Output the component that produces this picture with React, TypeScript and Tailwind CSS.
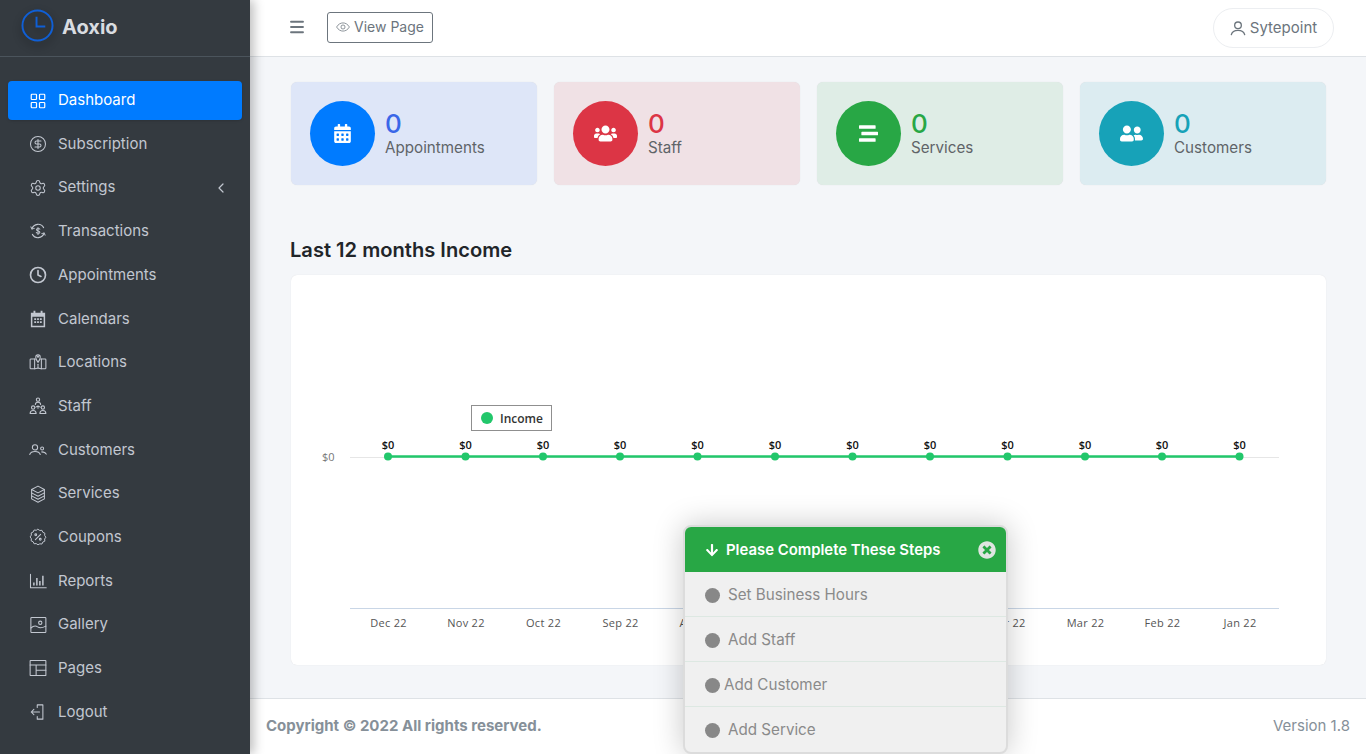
import type { ReactNode } from "react";
import {
  ChevronLeft,
  CircleDollarSign,
  Clock,
  LayoutGrid,
  Menu,
  Settings,
} from "lucide-react";
import {
  FaArrowDown,
  FaCalendarAlt,
  FaStream,
  FaTimesCircle,
  FaUserFriends,
  FaUsers,
} from "react-icons/fa";

const Line = ({ children }: { children: ReactNode }) => (
  <svg viewBox="0 0 24 24" className="h-4.5 w-4.5" fill="none" stroke="currentColor" strokeWidth="1.4" strokeLinecap="round" strokeLinejoin="round">
    {children}
  </svg>
);

const TransactionsIcon = () => (
  <Line>
    <path d="M4 9a8.5 8.5 0 0 1 15.5-1.5" />
    <path d="M20 15a8.5 8.5 0 0 1-15.5 1.5" />
    <path d="M2.5 6.5 4 9.5l3-1" />
    <path d="m21.5 17.5-1.5-3-3 1" />
    <path d="M14.5 9.5c-.5-1-4.5-1.500-4.500.7 0 2.300 4.500 1.100 4.500 3.400 0 2-4 1.700-4.700.4M12 7.500v9" />
  </Line>
);

const CalendarsIcon = () => (
  <svg viewBox="0 0 24 24" className="h-4.5 w-4.5" fill="currentColor">
    <path fillRule="evenodd" d="M6 1h2.500v2.500h7V1H18v2.500h3.500V23h-19V3.500H6zM4.500 9v12h15V9zM7 11h2.500v2.200H7zm3.800 0h2.400v2.200h-2.400zm3.700 0H17v2.200h-2.500zM7 15h2.500v2.200H7zm3.800 0h2.400v2.200h-2.400zm3.700 0H17v2.200h-2.500z" />
  </svg>
);

const LocationsIcon = () => (
  <Line>
    <path d="M8.500 8H2.500a1 1 0 0 0-1 1v11a1 1 0 0 0 1 1H8l4-1 4 1h5.500a1 1 0 0 0 1-1V9a1 1 0 0 0-1-1h-6" />
    <path d="M7.500 8v13M16.500 8v13" />
    <path d="M12 12.500C10 9.500 9 7.500 9 5.500a3 3 0 0 1 6 0c0 2-1 4-3 7z" />
    <path d="M12 15v5" />
    <circle cx="12" cy="5" r=".7" />
  </Line>
);

const StaffIcon = () => (
  <Line>
    <circle cx="12" cy="3.500" r="2.200" />
    <path d="M8.500 10c0-2 1.500-3 3.500-3s3.500 1 3.500 3" />
    <circle cx="5.500" cy="14" r="2.200" />
    <path d="M1.500 22c0-2.500 1.500-4 4-4s4 1.500 4 4z" />
    <circle cx="18.500" cy="14" r="2.200" />
    <path d="M14.500 22c0-2.500 1.500-4 4-4s4 1.500 4 4z" />
    <path d="M12 12v3M12 12l-3 1.500M12 12l3 1.500" />
  </Line>
);

const CustomersIcon = () => (
  <Line>
    <circle cx="8" cy="8.500" r="3.500" />
    <path d="M1 18c.8-2.800 3.500-4 7-4s6.200 1.200 7 4" />
    <circle cx="17.500" cy="10" r="2" />
    <path d="M17 14.500c3 0 5 1 6 3" />
  </Line>
);

const ServicesIcon = () => (
  <Line>
    <path d="m12 1.500 8.500 4.500-8.500 4.500L3.500 6z" />
    <path d="m3.500 10.500 8.500 4.500 8.500-4.500" />
    <path d="m3.500 14.500 8.500 4.500 8.500-4.500" />
    <path d="M3.500 6v12.500l8.500 4.500 8.500-4.500V6" />
  </Line>
);

const CouponsIcon = () => (
  <Line>
    <path d="M12 1.500l2.600 1.800 3.100-.3 1.300 2.900 2.900 1.300-.3 3.100 1.800 2.700-1.800 2.600.3 3.100-2.900 1.300-1.300 2.900-3.100-.3L12 24l-2.600-1.800-3.100.3L5 19.600l-2.900-1.300.3-3.100L.6 12.600l1.800-2.700-.3-3.100L5 5.500l1.300-2.900 3.100.3z" transform="translate(12 12) scale(.92) translate(-12 -12.700)" />
    <path d="M15.500 8.500l-7 7" />
    <circle cx="9" cy="9" r="1.200" />
    <circle cx="15" cy="15" r="1.200" />
  </Line>
);

const ReportsIcon = () => (
  <Line>
    <path d="M2 3v18h21" />
    <path d="M6.500 18v-4M10.500 18V8M14.500 18v-6M18.500 18V5" strokeWidth="2" strokeLinecap="butt" />
  </Line>
);

const GalleryIcon = () => (
  <Line>
    <rect x="2.500" y="2" width="20" height="20" rx="1" />
    <circle cx="15" cy="9" r="2.200" />
    <path d="M2.500 16c4-3.500 6-3.500 9-1.500s6 1.500 11-1" />
  </Line>
);

const PagesIcon = () => (
  <Line>
    <rect x="1.500" y="2" width="21" height="20" rx="0.500" />
    <path d="M1.500 8h21M9.500 8v14M9.500 15h13" />
  </Line>
);

const LogoutIcon = () => (
  <Line>
    <path d="M11 6V2.500h7.500v19H11V18" />
    <path d="M14 12H3M6.500 8.500 3 12l3.500 3.500" />
  </Line>
);

const EyeIcon = () => (
  <svg viewBox="0 0 24 24" className="h-3.5 w-3.5" fill="none" stroke="currentColor" strokeWidth="1.300">
    <path d="M1 12c3-5 7-7 11-7s8 2 11 7c-3 5-7 7-11 7s-8-2-11-7z" />
    <circle cx="12" cy="12" r="3.500" />
  </svg>
);

const UserIcon = () => (
  <svg viewBox="0 0 24 24" className="h-4 w-4" fill="none" stroke="currentColor" strokeWidth="2" strokeLinecap="round">
    <circle cx="12" cy="8" r="5" />
    <path d="M2 22c1-4.500 5-6.500 10-6.500s9 2 10 6.500" />
  </svg>
);

const navItems: { label: string; icon: ReactNode; caret?: boolean }[] = [
  { label: "Dashboard", icon: <LayoutGrid className="h-4.5 w-4.5" strokeWidth={1.6} /> },
  { label: "Subscription", icon: <CircleDollarSign className="h-4.5 w-4.5" strokeWidth={1.4} /> },
  { label: "Settings", icon: <Settings className="h-4.5 w-4.5" strokeWidth={1.4} />, caret: true },
  { label: "Transactions", icon: <TransactionsIcon /> },
  { label: "Appointments", icon: <Clock className="h-4.5 w-4.5" strokeWidth={2.2} /> },
  { label: "Calendars", icon: <CalendarsIcon /> },
  { label: "Locations", icon: <LocationsIcon /> },
  { label: "Staff", icon: <StaffIcon /> },
  { label: "Customers", icon: <CustomersIcon /> },
  { label: "Services", icon: <ServicesIcon /> },
  { label: "Coupons", icon: <CouponsIcon /> },
  { label: "Reports", icon: <ReportsIcon /> },
  { label: "Gallery", icon: <GalleryIcon /> },
  { label: "Pages", icon: <PagesIcon /> },
  { label: "Logout", icon: <LogoutIcon /> },
];

const Sidebar = () => (
  <aside className="relative z-10 flex h-[754px] w-[250px] shrink-0 flex-col bg-[#343a40] shadow-[4px_0_10px_rgba(0,0,0,0.25)]">
    <div className="flex h-[57px] shrink-0 items-center gap-2 border-b border-[#4b545c] pb-1.5 pl-[21px]">
      <svg viewBox="0 0 34 34" className="h-[33px] w-[33px] drop-shadow-[0_4px_4px_rgba(0,0,0,0.45)]" fill="none" stroke="#0f5fd6" strokeWidth="2">
        <circle cx="17" cy="17" r="15.500" />
        <path d="M16 8v10h9" />
      </svg>
      <span className="mt-1 text-xl font-bold text-[#d9dce0]">Aoxio</span>
    </div>
    <nav className="flex flex-col px-2 pt-6">
      {navItems.map((item, i) => (
        <a
          key={item.label}
          className={
            i === 0
              ? "mb-[4.7px] flex h-[39px] items-center gap-[11px] rounded bg-[#007bff] pl-[21px] text-[15px] text-white shadow-sm"
              : "mb-1 flex h-[39.7px] items-center gap-[11px] pb-px pl-[21px] text-[15px] text-[#c2c7d0]"
          }
        >
          {item.icon}
          <span>{item.label}</span>
          {item.caret && <ChevronLeft className="mr-[13px] ml-auto h-4 w-4" strokeWidth={1.800} />}
        </a>
      ))}
    </nav>
  </aside>
);

const TopBar = () => (
  <header className="flex h-[57px] shrink-0 items-center border-b border-[#dee2e6] bg-white pr-8 pl-[38px]">
    <Menu className="-mt-0.5 h-[18px] w-[18px] text-[#6c757d]" strokeWidth={2.5} />
    <a className="-mt-0.5 ml-[21px] flex h-[31px] w-[106px] items-center justify-center gap-1 rounded-[3px] border border-[#6c757d] text-sm text-[#6c757d]">
      <EyeIcon />
      View Page
    </a>
    <div className="ml-auto flex h-10 w-[121px] items-center justify-center gap-1 rounded-full border border-[#eceef1] text-[15px] text-[#6c757d]">
      <UserIcon />
      Sytepoint
    </div>
  </header>
);

const stats = [
  { label: "Appointments", icon: <FaCalendarAlt size={19} />, card: "bg-[#dee6f8]", circle: "bg-[#007bff]", num: "text-[#3a67e8]" },
  { label: "Staff", icon: <FaUsers size={23} />, card: "bg-[#f0e1e5]", circle: "bg-[#dc3545]", num: "text-[#dc3545]" },
  { label: "Services", icon: <FaStream size={19} />, card: "bg-[#dfede6]", circle: "bg-[#28a745]", num: "text-[#28a745]" },
  { label: "Customers", icon: <FaUserFriends size={23} />, card: "bg-[#dcecf1]", circle: "bg-[#17a2b8]", num: "text-[#17a2b8]" },
];

const StatCards = () => (
  <div className="grid grid-cols-4 gap-[17px]">
    {stats.map((s) => (
      <div key={s.label} className={`flex h-[103px] items-center gap-[10px] rounded-md pl-[19px] shadow-[0_0_1px_rgba(0,0,0,0.12)] ${s.card}`}>
        <div className={`flex h-[65px] w-[65px] items-center justify-center rounded-full text-white ${s.circle}`}>{s.icon}</div>
        <div className="flex flex-col pb-0.5">
          <span className={`text-[26px] leading-[30px] font-medium ${s.num}`}>0</span>
          <span className="text-[15.2px] leading-[18px] text-[#5f6468]">{s.label}</span>
        </div>
      </div>
    ))}
  </div>
);

const months = ["Dec 22", "Nov 22", "Oct 22", "Sep 22", "Aug 22", "Jul 22", "Jun 22", "May 22", "Apr 22", "Mar 22", "Feb 22", "Jan 22"];
const xs = [97, 174.5, 252, 329, 406.5, 484, 561.5, 639, 716.500, 794, 871, 948.5];

const IncomeChart = () => (
  <div className="mt-3 h-[390px] rounded-md bg-white shadow-[0_0_1px_rgba(0,0,0,0.12)]">
    <svg width="1035" height="390" className="font-['Open_Sans',sans-serif]">
      <rect x="180.500" y="130.500" width="80" height="25" fill="#fff" stroke="#8f8f8f" />
      <circle cx="196" cy="143" r="6" fill="#22c76b" />
      <text x="209" y="147.500" fontSize="12" fill="#333" fontWeight="600">Income</text>
      <text x="31" y="186" fontSize="11" fill="#777">$0</text>
      <line x1="59" x2="988" y1="182.500" y2="182.500" stroke="#e6e6e6" />
      <line x1="59" x2="988" y1="333.500" y2="333.500" stroke="#c9d6e6" />
      <line x1="97" x2="948.500" y1="181.500" y2="181.500" stroke="#22c76b" strokeWidth="2.500" />
      {xs.map((x, i) => (
        <g key={months[i]}>
          <circle cx={x} cy="181.500" r="4" fill="#22c76b" />
          <text x={x} y="174" fontSize="11" fontWeight="600" textAnchor="middle" fill="#111">$0</text>
          <text x={x + 0.5} y="352" fontSize="11" textAnchor="middle" fill="#555" letterSpacing="0.300">{months[i]}</text>
        </g>
      ))}
    </svg>
  </div>
);

const steps = [
  { label: "Set Business Hours", gap: "gap-2" },
  { label: "Add Staff", gap: "gap-2" },
  { label: "Add Customer", gap: "gap-1" },
  { label: "Add Service", gap: "gap-2" },
];

const StepsPopup = () => (
  <div className="absolute top-[525px] left-[683px] z-20 w-[325px] overflow-hidden rounded-lg border-2 border-[#dcdcdc] bg-[#f0f0f0] shadow-[0_0_30px_rgba(0,0,0,0.22)]">
    <div className="flex h-[45px] items-center bg-[#28a745] pr-[10px] pl-5 text-[14.9px] font-semibold text-white">
      <FaArrowDown size={14} />
      <span className="mt-0.5 ml-[7px]">Please Complete These Steps</span>
      <FaTimesCircle size={18} className="ml-auto text-[#dfe5e1]" />
    </div>
    {steps.map((s, i) => (
      <div
        key={s.label}
        className={
          i === steps.length - 1
            ? `flex h-[45px] items-center pt-0.5 pl-5 text-[15.2px] text-[#8a8a8a] ${s.gap}`
            : `flex h-[45px] items-center border-b border-[#dde8e2] pt-0.5 pl-5 text-[15.2px] text-[#8a8a8a] ${s.gap}`
        }
      >
        <span className="h-[15px] w-[15px] rounded-full bg-[#888]" />
        {s.label}
      </div>
    ))}
  </div>
);

export default function App() {
  return (
    <div className="relative flex h-[754px] w-full overflow-hidden bg-[#f4f6f9] font-['Inter',sans-serif]">
      <Sidebar />
      <main className="flex min-w-0 flex-1 flex-col">
        <TopBar />
        <div className="flex-1 pt-[25px] pr-10 pl-[41px]">
          <StatCards />
          <h2 className="mt-[52px] -ml-px text-[20.1px] leading-[26px] font-semibold text-[#212529]">Last 12 months Income</h2>
          <IncomeChart />
        </div>
        <footer className="flex h-[56px] shrink-0 items-center justify-between border-t border-[#dee2e6] bg-white px-4 text-[15px] text-[#869099]">
          <strong className="font-bold">Copyright © 2022 All rights reserved.</strong>
          <span>Version 1.8</span>
        </footer>
      </main>
      <StepsPopup />
    </div>
  );
}
